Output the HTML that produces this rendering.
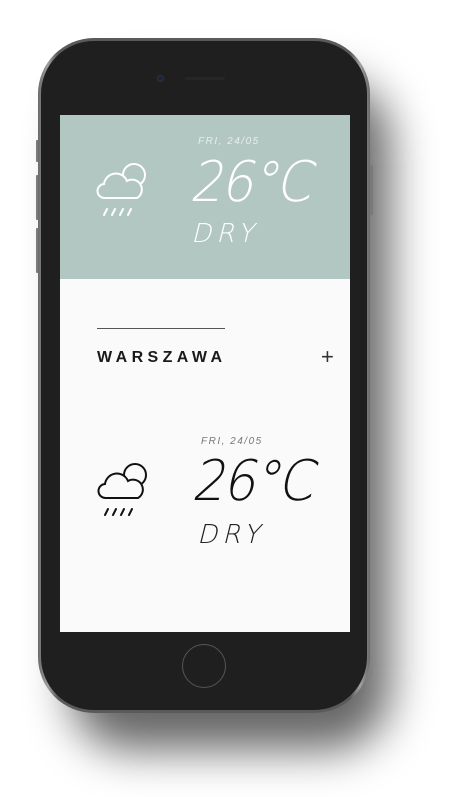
<!DOCTYPE html>
<html><head><meta charset="utf-8"><style>
html,body{margin:0;padding:0;width:454px;height:797px;background:#fff;overflow:hidden;position:relative;font-family:"Liberation Sans",sans-serif}
.shadow{position:absolute;left:70px;top:80px;width:320px;height:670px;border-radius:60px;background:rgba(0,0,0,0.6);filter:blur(22px)}
.phone{position:absolute;left:38px;top:38px;width:332px;height:675px;border-radius:56px;background:linear-gradient(90deg,#6a6a6a,#a0a0a0 3%,#5a5a5a 6%,#5a5a5a 94%,#a0a0a0 97%,#6a6a6a);}
.inner{position:absolute;left:3px;top:3px;right:3px;bottom:3px;border-radius:53px;background:#1f1f1f}
.btn{position:absolute;background:#7a7a7a;width:3px;border-radius:1px}
.screen{position:absolute;left:60px;top:115px;width:290px;height:517px;background:#fafafa;overflow:hidden}
.top{position:absolute;left:0;top:0;width:290px;height:164px;background:#b3c7c2}
.t{position:absolute;font-style:italic;white-space:nowrap}
.thin{font-family:"DejaVu Sans ExtraLight","DejaVu Sans Light","Liberation Sans",sans-serif;font-weight:200}
.big{font-size:56px;letter-spacing:-2px;transform:scaleX(0.92);transform-origin:left top}
.dry{font-size:26px;letter-spacing:5px}
</style></head><body>
<div class="shadow"></div>
<div class="btn" style="left:36px;top:140px;height:22px"></div>
<div class="btn" style="left:36px;top:175px;height:45px"></div>
<div class="btn" style="left:36px;top:228px;height:45px"></div>
<div class="btn" style="left:370px;top:165px;height:50px"></div>
<div class="phone"><div class="inner"></div></div>
<div style="position:absolute;left:157px;top:75px;width:5px;height:5px;border-radius:50%;background:#1a2340;border:1px solid #333"></div>
<div style="position:absolute;left:185px;top:77px;width:40px;height:3px;border-radius:2px;background:#262626"></div>
<div style="position:absolute;left:182px;top:644px;width:44px;height:44px;border-radius:50%;border:1.5px solid #555;box-sizing:border-box"></div>
<div class="screen">
 <div class="top"></div>
 <div class="t" style="left:138px;top:21px;font-size:10px;letter-spacing:1.5px;color:#e6eeec">FRI, 24/05</div>
 <div class="t thin big" style="left:129px;top:35px;color:#fff">26°C</div>
 <div class="t thin dry" style="left:131px;top:104px;color:#fff">DRY</div>
 <div style="position:absolute;left:37px;top:213px;width:128px;height:1px;background:#555"></div>
 <div style="position:absolute;left:37px;top:234px;font-size:16px;font-weight:bold;letter-spacing:4.4px;color:#1a1a1a">WARSZAWA</div>
 <div style="position:absolute;left:261px;top:231px;font-size:22px;color:#333;line-height:22px">+</div>
 <div class="t" style="left:141px;top:321px;font-size:10px;letter-spacing:1.5px;color:#777">FRI, 24/05</div>
 <div class="t thin big" style="left:131px;top:334px;color:#111">26°C</div>
 <div class="t thin dry" style="left:137px;top:405px;color:#222">DRY</div>
</div>
<svg style="position:absolute;left:90px;top:160px" width="70" height="60" viewBox="0 0 70 60" fill="none" stroke="#fff" stroke-width="2" stroke-linecap="round">
<circle cx="44" cy="15" r="11" fill="#b3c7c2"/>
<path d="M15,38 A7,7 0 0 1 14,24 A12,12 0 0 1 37,21 A9.5,9.5 0 0 1 47,38 Z" fill="#b3c7c2"/>
<path d="M14,55 L17,49 M22,55 L25,49 M30,55 L33,49 M38,55 L41,49"/>
</svg>
<svg style="position:absolute;left:91px;top:460px" width="70" height="60" viewBox="0 0 70 60" fill="none" stroke="#111" stroke-width="2" stroke-linecap="round">
<circle cx="44" cy="15" r="11" fill="#fafafa"/>
<path d="M15,38 A7,7 0 0 1 14,24 A12,12 0 0 1 37,21 A9.5,9.5 0 0 1 47,38 Z" fill="#fafafa"/>
<path d="M14,55 L17,49 M22,55 L25,49 M30,55 L33,49 M38,55 L41,49"/>
</svg>
</body></html>
